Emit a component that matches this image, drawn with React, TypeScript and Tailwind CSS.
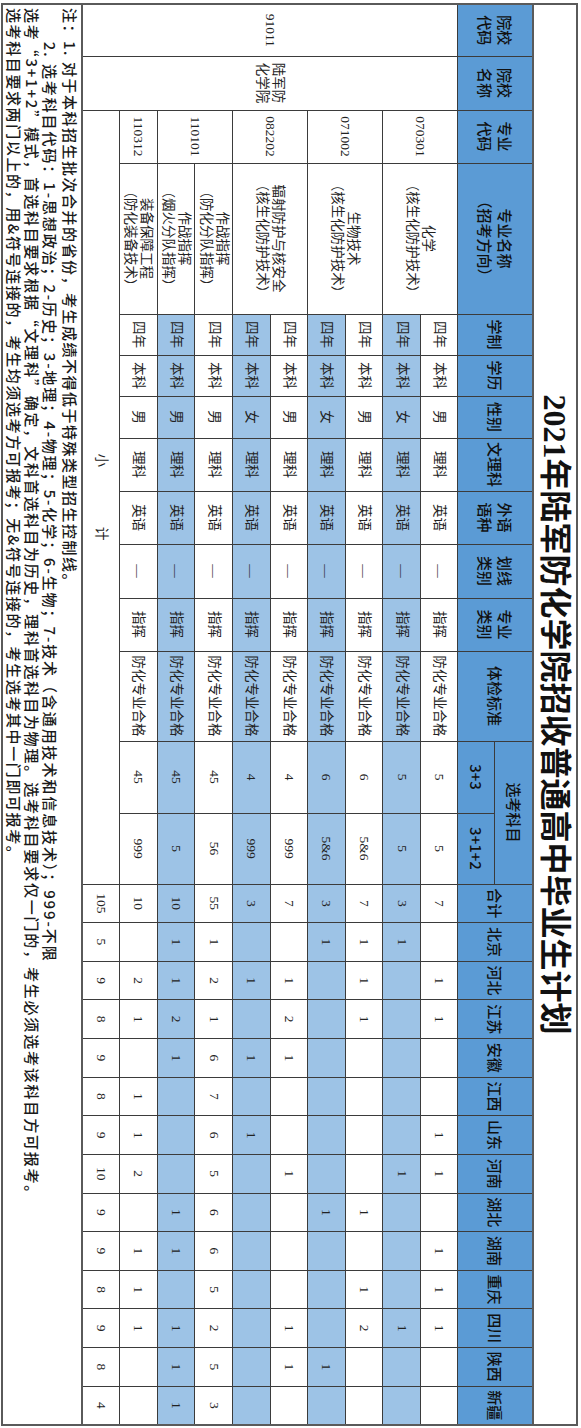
import React from 'react';

const provinces = ['北京', '河北', '江苏', '安徽', '江西', '山东', '河南', '湖北', '湖南', '重庆', '四川', '陕西', '新疆'];

type Row = {
  codeSpan: number;
  code?: string;
  nameSpan: number;
  name?: string[];
  sex: string;
  a: string;
  b: string;
  total: string;
  p: string[];
  blue: boolean;
};

const rows: Row[] = [
  { codeSpan: 2, code: '070301', nameSpan: 2, name: ['化学', '（核生化防护技术）'], sex: '男', a: '5', b: '5', total: '7', p: ['', '1', '1', '', '', '1', '1', '', '1', '1', '1', '', ''], blue: false },
  { codeSpan: 0, nameSpan: 0, sex: '女', a: '5', b: '5', total: '3', p: ['1', '', '', '', '', '', '1', '', '', '', '1', '', ''], blue: true },
  { codeSpan: 2, code: '071002', nameSpan: 2, name: ['生物技术', '（核生化防护技术）'], sex: '男', a: '6', b: '5&6', total: '7', p: ['1', '1', '1', '', '', '', '', '1', '', '1', '2', '', ''], blue: false },
  { codeSpan: 0, nameSpan: 0, sex: '女', a: '6', b: '5&6', total: '3', p: ['1', '', '', '', '', '', '', '1', '', '', '', '1', ''], blue: true },
  { codeSpan: 2, code: '082202', nameSpan: 2, name: ['辐射防护与核安全', '（核生化防护技术）'], sex: '男', a: '4', b: '999', total: '7', p: ['', '1', '2', '1', '', '', '1', '', '', '', '1', '1', ''], blue: false },
  { codeSpan: 0, nameSpan: 0, sex: '女', a: '4', b: '999', total: '3', p: ['', '1', '', '1', '', '1', '', '', '', '', '', '', ''], blue: true },
  { codeSpan: 2, code: '110101', nameSpan: 1, name: ['作战指挥', '（防化分队指挥）'], sex: '男', a: '45', b: '56', total: '55', p: ['1', '2', '1', '6', '7', '6', '5', '6', '6', '5', '2', '5', '3'], blue: false },
  { codeSpan: 0, nameSpan: 1, name: ['作战指挥', '（烟火分队指挥）'], sex: '男', a: '45', b: '5', total: '10', p: ['1', '1', '2', '1', '', '', '', '1', '1', '', '1', '1', '1'], blue: true },
  { codeSpan: 1, code: '110312', nameSpan: 1, name: ['装备保障工程', '（防化装备技术）'], sex: '男', a: '45', b: '999', total: '10', p: ['', '2', '1', '', '1', '1', '2', '', '1', '1', '1', '', ''], blue: false },
];

const subtotal = { total: '105', p: ['5', '9', '8', '9', '8', '9', '10', '9', '9', '8', '9', '8', '4'] };

const hd =
  "border border-[#3b3b3b] bg-[#5b9bd5] text-[15px] leading-[20px] font-medium text-[#111111] text-center align-middle p-0 font-['Noto_Sans_CJK_SC',sans-serif]";
const cellBase =
  "border border-[#3b3b3b] text-[13.5px] leading-[16px] text-[#222222] text-center align-middle p-0 font-['Liberation_Serif','Noto_Sans_CJK_SC',serif]";

const colWidths = [
  'w-[52px]', 'w-[54px]', 'w-[53px]', 'w-[151px]', 'w-[41px]', 'w-[41px]', 'w-[42px]', 'w-[53px]', 'w-[53px]',
  'w-[54px]', 'w-[53px]', 'w-[90px]', 'w-[72px]', 'w-[71px]',
];

export default function App() {
  return (
    <div className="w-[581px] h-[1428px] overflow-hidden bg-white">
      <div className="w-[1428px] h-[581px] origin-top-left [transform:translateX(581px)_rotate(90deg)] pl-[3px] pt-[3px] bg-white">
        <table className="w-[1421px] h-[575px] table-fixed border-collapse border-2 border-[#5a5a5a]">
          <colgroup>
            {colWidths.map((w, i) => (
              <col key={i} className={w} />
            ))}
            {Array.from({ length: 14 }).map((_, i) => (
              <col key={'p' + i} className="w-[38.64px]" />
            ))}
          </colgroup>
          <tbody>
            <tr className="h-[44px]">
              <td
                colSpan={28}
                className="border-2 border-[#5a5a5a] bg-white text-center align-middle p-0 text-[32px] leading-[40px] font-bold text-[#111111] font-['Liberation_Serif','Noto_Sans_CJK_SC',serif]"
              >
                2021年陆军防化学院招收普通高中毕业生计划
              </td>
            </tr>
            <tr className="h-[38px]">
              <td rowSpan={2} className={hd}>院校<br />代码</td>
              <td rowSpan={2} className={hd}>院校<br />名称</td>
              <td rowSpan={2} className={hd}>专业<br />代码</td>
              <td rowSpan={2} className={hd}>专业名称<br />（招考方向）</td>
              <td rowSpan={2} className={hd}>学制</td>
              <td rowSpan={2} className={hd}>学历</td>
              <td rowSpan={2} className={hd}>性别</td>
              <td rowSpan={2} className={hd}>文理科</td>
              <td rowSpan={2} className={hd}>外语<br />语种</td>
              <td rowSpan={2} className={hd}>划线<br />类别</td>
              <td rowSpan={2} className={hd}>专业<br />类别</td>
              <td rowSpan={2} className={hd}>体检标准</td>
              <td colSpan={2} className={hd}>选考科目</td>
              <td rowSpan={2} className={hd}>合计</td>
              {provinces.map((p) => (
                <td key={p} rowSpan={2} className={hd}>{p}</td>
              ))}
            </tr>
            <tr className="h-[37px]">
              <td className={hd}>3+3</td>
              <td className={hd}>3+1+2</td>
            </tr>
            {rows.map((r, i) => {
              const bg = r.blue ? ' bg-[#9dc3e6]' : ' bg-white';
              const c = cellBase + bg;
              return (
                <tr key={i} className="h-[37.6px]">
                  {i === 0 && (
                    <>
                      <td rowSpan={10} className={cellBase + ' bg-white'}>91011</td>
                      <td rowSpan={10} className={cellBase + ' bg-white'}>陆军防<br />化学院</td>
                    </>
                  )}
                  {r.codeSpan > 0 && (
                    <td rowSpan={r.codeSpan} className={cellBase + ' bg-white'}>{r.code}</td>
                  )}
                  {r.nameSpan > 0 && r.name && (
                    <td rowSpan={r.nameSpan} className={cellBase + ' bg-white'}>
                      {r.name[0]}
                      <br />
                      {r.name[1]}
                    </td>
                  )}
                  <td className={c}>四年</td>
                  <td className={c}>本科</td>
                  <td className={c}>{r.sex}</td>
                  <td className={c}>理科</td>
                  <td className={c}>英语</td>
                  <td className={c}>—</td>
                  <td className={c}>指挥</td>
                  <td className={c}>防化专业合格</td>
                  <td className={c}>{r.a}</td>
                  <td className={c}>{r.b}</td>
                  <td className={c}>{r.total}</td>
                  {r.p.map((v, j) => (
                    <td key={j} className={c}>{v}</td>
                  ))}
                </tr>
              );
            })}
            <tr className="h-[37.6px]">
              <td colSpan={12} className={cellBase + ' bg-white'}>
                <span>小</span>
                <span className="inline-block w-[60px]"></span>
                <span>计</span>
              </td>
              <td className={cellBase + ' bg-white'}>{subtotal.total}</td>
              {subtotal.p.map((v, j) => (
                <td key={j} className={cellBase + ' bg-white'}>{v}</td>
              ))}
            </tr>
            <tr className="h-[80px]">
              <td
                colSpan={28}
                className="border-2 border-[#5a5a5a] bg-white text-left align-top p-0 pl-[3px] text-[15px] tracking-[1.5px] font-medium text-[#1a1a1a] font-['Noto_Sans_CJK_SC',sans-serif] whitespace-nowrap"
              >
                <div className="leading-[22px]">注：1. 对于本科招生批次合并的省份，考生成绩不得低于特殊类型招生控制线。</div>
                <div className="leading-[18px] tracking-[1.9px]">
                  <span className="invisible">注：</span>2. 选考科目代码：1-思想政治；2-历史；3-地理；4-物理；5-化学；6-生物；7-技术（含通用技术和信息技术）；999-不限
                </div>
                <div className="leading-[18px] tracking-[1.8px]">
                  选考“3+1+2”模式，首选科目要求根据“文理科”确定，文科首选科目为历史，理科首选科目为物理。选考科目要求仅一门的，考生必须选考该科目方可报考。
                </div>
                <div className="leading-[18px] tracking-[1.6px]">
                  选考科目要求两门以上的，用&amp;符号连接的，考生均须选考方可报考；无&amp;符号连接的，考生选考其中一门即可报考。
                </div>
              </td>
            </tr>
          </tbody>
        </table>
      </div>
    </div>
  );
}
